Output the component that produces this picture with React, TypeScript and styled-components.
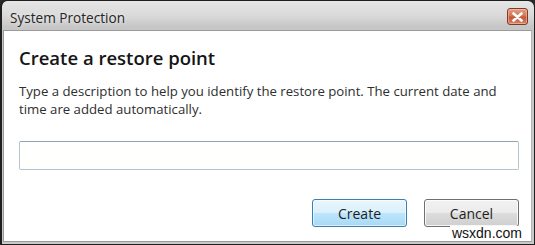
import React from "react";
import styled, { createGlobalStyle } from "styled-components";

const Global = createGlobalStyle`
  html, body { margin: 0; padding: 0; background: #2a2a2a; }
  body { font-family: "Open Sans", "Noto Sans", sans-serif; }
  * { box-sizing: border-box; }
`;

const Window = styled.div`
  position: relative;
  width: 535px;
  height: 245px;
  display: flex;
  flex-direction: column;
  border: 1px solid #1f1f1f;
  border-left-width: 2px;
  border-radius: 7px 7px 0 0;
  background: linear-gradient(#e6e6e6 0px, #dadada 14px, #c6c6c6 26px, #c9c9c9 100%);
  overflow: hidden;
`;

const TitleBar = styled.div`
  height: 29px;
  flex: none;
  display: flex;
  align-items: center;
  justify-content: space-between;
  padding: 0 6px 0 8px;
`;

const Title = styled.span`
  font-size: 13.6px;
  color: #262626;
  margin-top: 4px;
  text-shadow: 0 0 4px rgba(255, 255, 255, 0.8);
`;

const CloseButton = styled.div`
  width: 21px;
  height: 17px;
  margin-top: 2px;
  border: 1px solid #7d3a26;
  border-radius: 3px;
  background: linear-gradient(#e2a085 0%, #d57553 45%, #c4573a 55%, #d88462 100%);
  display: flex;
  align-items: center;
  justify-content: center;
  box-shadow: inset 0 0 0 1px rgba(255, 220, 200, 0.45);
`;

const Frame = styled.div`
  flex: 1;
  display: flex;
  padding: 0 2px 2px 1px;
`;

const Client = styled.div`
  flex: 1;
  background: #ffffff;
  border: 1px solid #9a9a9a;
  border-right-color: #b5b5b5;
  display: flex;
  flex-direction: column;
  padding: 13px 12px 0 15px;
`;

const Heading = styled.h1`
  margin: 0;
  font-size: 18.5px;
  font-weight: 600;
  color: #151515;
  line-height: 28px;
`;

const Description = styled.p`
  margin: 10px 0 0;
  font-size: 13.2px;
  line-height: 18px;
  color: #2e2e2e;
`;

const TextField = styled.input`
  margin-top: 23px;
  height: 29px;
  width: 100%;
  border: 1px solid #b3c4d0;
  border-top-color: #8ea3b2;
  border-radius: 2px;
  background: #fffffe;
  outline: none;
`;

const ButtonRow = styled.div`
  display: flex;
  justify-content: flex-end;
  gap: 17px;
  margin-top: 29px;
`;

const Button = styled.button<{ $primary?: boolean }>`
  width: 95px;
  height: 28px;
  border-radius: 3px;
  font-family: "Open Sans", "Noto Sans", sans-serif;
  font-size: 14px;
  color: #1e1e1e;
  padding: 0;
  border: 1px solid ${(p) => (p.$primary ? "#3c7fb1" : "#707070")};
  background: ${(p) =>
    p.$primary
      ? "linear-gradient(#eaf6fd 0%, #d9f0fc 50%, #bee6fd 50%, #a7d9f5 100%)"
      : "linear-gradient(#f2f2f2 0%, #ebebeb 50%, #dddddd 50%, #cfcfcf 100%)"};
  box-shadow: inset 0 0 0 1px ${(p) => (p.$primary ? "rgba(255,255,255,0.6)" : "rgba(255,255,255,0.8)")};
`;

const Watermark = styled.span`
  position: absolute;
  right: 10px;
  bottom: 3px;
  font-family: "Liberation Sans", Arial, sans-serif;
  font-size: 14px;
  line-height: 15px;
  color: #111;
  background: #fff;
  padding: 0 2px;
`;

export default function App() {
  return (
    <>
      <Global />
      <Window>
        <TitleBar>
          <Title>System Protection</Title>
          <CloseButton>
            <svg width="11" height="10" viewBox="0 0 11 10">
              <path d="M1.5 1.5 L9.5 8.5 M9.5 1.5 L1.5 8.5" stroke="#ffffff" strokeWidth="2.6" strokeLinecap="round" />
            </svg>
          </CloseButton>
        </TitleBar>
        <Frame>
          <Client>
            <Heading>Create a restore point</Heading>
            <Description>
              Type a description to help you identify the restore point. The current date and time are added automatically.
            </Description>
            <TextField />
            <ButtonRow>
              <Button $primary>Create</Button>
              <Button>Cancel</Button>
            </ButtonRow>
          </Client>
        </Frame>
        <Watermark>wsxdn.com</Watermark>
      </Window>
    </>
  );
}
